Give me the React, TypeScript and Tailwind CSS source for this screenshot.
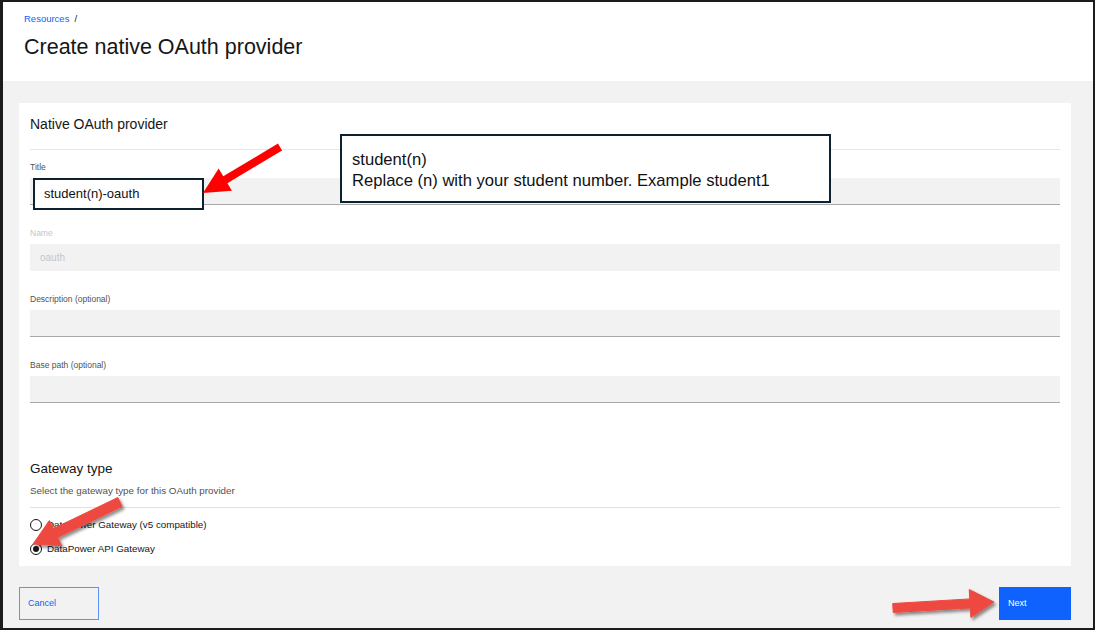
const font = { fontFamily: '"Liberation Sans", Arial, sans-serif' };

function Field({ label, value, disabled }: { label: string; value?: string; disabled?: boolean }) {
  return (
    <div className="flex flex-col">
      <label
        className={`h-[10px] text-[8.5px] leading-[10px] mb-[6px] ${disabled ? "text-[#c6c6c6]" : "text-[#525252]"}`}
      >
        {label}
      </label>
      <div
        className={`h-[27px] bg-[#f2f2f2] flex items-center px-[10px] text-[10px] ${
          disabled ? "text-[#c6c6c6]" : "border-b border-[#a8a8a8] text-[#161616]"
        }`}
      >
        {value}
      </div>
    </div>
  );
}

function Radio({ label, checked }: { label: string; checked?: boolean }) {
  return (
    <div className="h-[16px] flex items-center gap-[5px]">
      <span className="w-[12px] h-[12px] rounded-full border border-[#161616] flex items-center justify-center bg-white">
        {checked && <span className="w-[6px] h-[6px] rounded-full bg-[#161616]" />}
      </span>
      <span className="text-[9.8px] text-[#161616]">{label}</span>
    </div>
  );
}

function Arrows() {
  return (
    <svg className="absolute inset-0 pointer-events-none" width="1097" height="633" viewBox="0 0 1097 633">
      <defs>
        <filter id="sh" x="-20%" y="-40%" width="140%" height="180%">
          <feDropShadow dx="2" dy="2.5" stdDeviation="1.6" floodColor="#000" floodOpacity="0.45" />
        </filter>
      </defs>
      <polygon
        fill="#ff0000"
        points="277.95,143.57 223.25,176.27 218.63,168.55 203,193 231.97,190.85 227.35,183.13 282.05,150.43"
      />
      <polygon
        fill="#ee4a40"
        filter="url(#sh)"
        strokeLinejoin="round"
        stroke="#ee4a40"
        strokeWidth="1"
        points="117.83,497.5 53.33,528.6 49.41,520.5 33,544 61.59,545.7 57.67,537.6 122.17,506.5"
      />
      <polygon
        fill="#ee4a40"
        filter="url(#sh)"
        strokeLinejoin="round"
        stroke="#ee4a40"
        strokeWidth="1"
        points="892.73,603.51 969.78,598.93 969.22,589.45 994,602 970.88,617.39 970.32,607.91 893.27,612.49"
      />
    </svg>
  );
}

export default function App() {
  return (
    <div className="relative w-[1097px] h-[633px] bg-white overflow-hidden" style={font}>
      <div className="w-[1095px] h-[630px] border-2 border-l-[3px] border-[#1c1c1c] flex flex-col">
        {/* header */}
        <div className="h-[79px] bg-white pl-[21px] pt-[11px]">
          <div className="text-[9.5px] leading-[12px] text-[#161616]">
            <span className="text-[#0f62fe]">Resources</span>
            <span className="ml-[5px]">/</span>
          </div>
          <h1 className="mt-[9px] text-[21.5px] leading-[26px] text-[#161616]">Create native OAuth provider</h1>
        </div>

        {/* body */}
        <div className="flex-1 bg-[#f2f2f2] pl-[16px] pr-[22px] pt-[22px] flex flex-col">
          <div className="bg-white px-[11px] pt-[12px] pb-[9px]">
            <div className="text-[14px] leading-[18px] text-[#161616]">Native OAuth provider</div>
            <div className="mt-[16px] h-px bg-[#e6e6e6]" />
            <div className="mt-[12px] flex flex-col gap-[23px]">
              <Field label="Title" />
              <Field label="Name" value="oauth" disabled />
              <Field label="Description (optional)" />
              <Field label="Base path (optional)" />
            </div>
            <div className="mt-[57px] text-[13.5px] leading-[18px] text-[#161616]">Gateway type</div>
            <div className="mt-[7px] text-[9.8px] leading-[12px] text-[#525252]">
              Select the gateway type for this OAuth provider
            </div>
            <div className="mt-[10px] h-px bg-[#e0e0e0]" />
            <div className="mt-[9px] flex flex-col gap-[8px]">
              <Radio label="DataPower Gateway (v5 compatible)" />
              <Radio label="DataPower API Gateway" checked />
            </div>
          </div>

          <div className="mt-[21px] flex justify-between">
            <button className="w-[80px] h-[33px] border border-[#5b93ff] text-[#0f62fe] text-[9px] text-left pl-[8px]">
              Cancel
            </button>
            <button className="w-[72px] h-[33px] bg-[#0f62fe] text-white text-[9px] text-left pl-[9px]">
              Next
            </button>
          </div>
        </div>
      </div>

      {/* annotation boxes */}
      <div className="absolute left-[33px] top-[178px] w-[171px] h-[32px] bg-white border-2 border-[#0d2230] flex items-center pl-[9px] text-[13px] text-[#111]">
        student(n)-oauth
      </div>
      <div className="absolute left-[340px] top-[134px] w-[491px] h-[69px] bg-white border-2 border-[#0d2230] pl-[10px] pt-[13px] text-[16.6px] leading-[21px] text-[#111]">
        <div>student(n)</div>
        <div>Replace (n) with your student number. Example student1</div>
      </div>

      <Arrows />
    </div>
  );
}
